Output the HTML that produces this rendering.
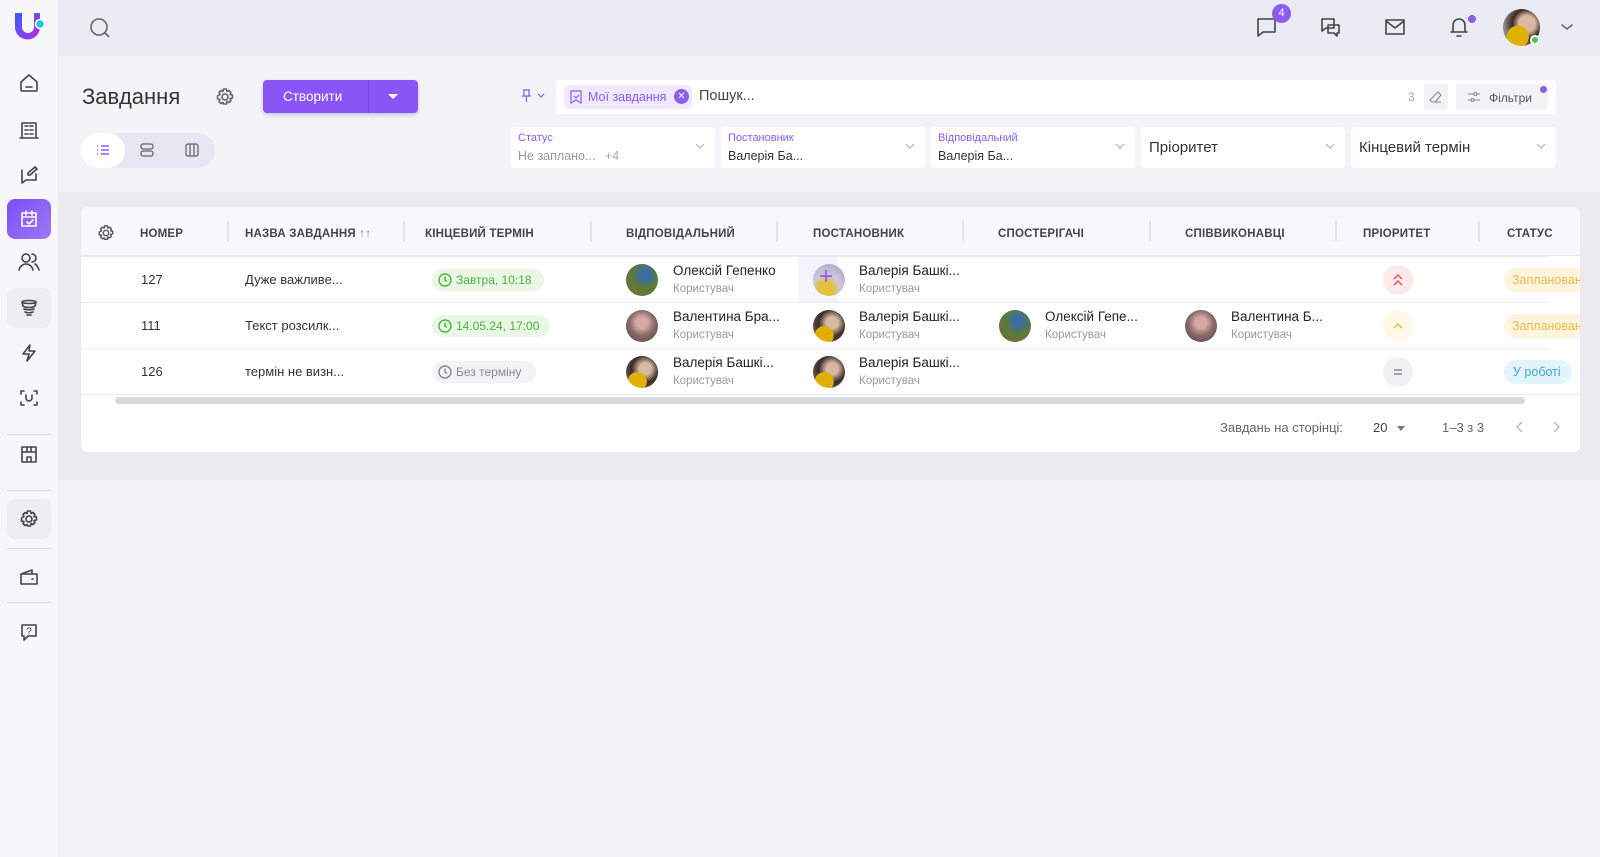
<!DOCTYPE html>
<html><head><meta charset="utf-8"><style>
*{box-sizing:border-box;margin:0;padding:0}
body{width:1600px;height:857px;overflow:hidden;background:#f1f1f6;font-family:"Liberation Sans",sans-serif;color:#333;position:relative}
.a{position:absolute}
svg{display:block}
.side{left:0;top:0;width:59px;height:857px;background:#f7f7fa;border-right:1px solid #ececf2}
.top{left:59px;top:0;width:1541px;height:56px;background:#ebebf4}
.head{left:59px;top:56px;width:1541px;height:136px;background:#f4f4f8}
.band{left:59px;top:192px;width:1541px;height:288px;background:#eaeaf0}
.ic{stroke:#444;fill:none;stroke-width:1.6;stroke-linecap:round;stroke-linejoin:round}
.fbox{background:#fff;border-radius:4px;height:41px;top:127px;width:204px}
.lbl{font-size:11px;color:#8a5cf0;left:7px;top:5px}
.val{font-size:12.5px;color:#333;left:7px;top:22px}
.chev{right:10px;top:15px}
.th{font-size:11.5px;font-weight:bold;color:#444;letter-spacing:.2px;top:21px}
.dv{width:2px;height:20px;background:#e3e3e8;top:14px}
.row{left:0;width:1468px;height:46px;border-top:1px solid #ebebef}
.t{font-size:13px;color:#333}
.nm{font-size:13.5px;color:#222}
.sub{font-size:11.5px;color:#999}
.av{width:32px;height:32px;border-radius:50%}
</style></head><body>
<div class="a side"></div>
<div class="a top"></div>
<div class="a head"></div>
<div class="a band"></div>

<svg class="a" style="left:12px;top:10px" width="34" height="34" viewBox="0 0 34 34"><defs><linearGradient id="g" x1="0" y1="0" x2="1" y2="1"><stop offset="0" stop-color="#3b5bff"/><stop offset="1" stop-color="#b52ee0"/></linearGradient></defs><path d="M3 3h7v14a6 6 0 0 0 12 0V3h6v14a12 12 0 0 1-25 0z" fill="url(#g)"/><circle cx="28" cy="14" r="4.5" fill="#27c6e0" stroke="#fff" stroke-width="1.5"/></svg>
<svg class="a" style="left:19px;top:73px" width="20" height="20" viewBox="0 0 20 20"><path class="ic" d="M2 9l8-7 8 7v8a1 1 0 0 1-1 1H3a1 1 0 0 1-1-1z M7 14h6"/></svg>
<svg class="a" style="left:19px;top:120px" width="20" height="20" viewBox="0 0 20 20"><path class="ic" d="M3 18V3h14v15 M1 18h18 M6 6h3M11 6h3M6 10h3M11 10h3M6 14h3M11 14h3"/></svg>
<svg class="a" style="left:19px;top:165px" width="20" height="20" viewBox="0 0 20 20"><path class="ic" d="M3 5v13l4-3h10V9 M9 8l7-6 2 2-7 6-2 0z"/></svg>
<div class="a" style="left:7px;top:199px;width:44px;height:40px;border-radius:8px;background:linear-gradient(135deg,#7a4ef5,#a077fa)"></div>
<svg class="a" style="left:19px;top:209px" width="20" height="20" viewBox="0 0 20 20"><path class="ic" style="stroke:#fff" d="M3 4h14v13H3z M3 8h14 M7 2v4 M13 2v4 M8 13l2 2 4-4"/></svg>
<svg class="a" style="left:18px;top:252px" width="22" height="20" viewBox="0 0 22 20"><path class="ic" d="M8 10a4 4 0 1 0 0-8 4 4 0 0 0 0 8z M1 18c1-4 4-6 7-6s6 2 7 6 M14 2a4 4 0 0 1 0 8 M17 12c2 1 3 3 4 6"/></svg>
<div class="a" style="left:7px;top:288px;width:44px;height:40px;border-radius:8px;background:#ededf3"></div>
<svg class="a" style="left:19px;top:298px" width="20" height="20" viewBox="0 0 20 20"><path class="ic" d="M3 4c0-2 14-2 14 0s-14 2-14 0 M3 4l1 4c2 2 10 2 12 0l1-4 M5 11c2 1 8 1 10 0 M6 14c2 1 6 1 8 0 M8 17h4"/></svg>
<svg class="a" style="left:19px;top:343px" width="20" height="20" viewBox="0 0 20 20"><path class="ic" d="M11 2L4 11h6l-2 7 8-10h-6z"/></svg>
<svg class="a" style="left:19px;top:388px" width="20" height="20" viewBox="0 0 20 20"><path class="ic" d="M2 6V3h3 M15 3h3v3 M18 14v3h-3 M5 17H2v-3 M7 7v3a3 3 0 0 0 6 0V7"/></svg>
<div class="a" style="left:7px;top:434px;width:44px;height:1px;background:#dcdce2"></div>
<svg class="a" style="left:19px;top:444px" width="20" height="20" viewBox="0 0 20 20"><path class="ic" d="M3 3h14v15H3z M3 8h14 M8 3v5 M12 3v5 M8 18v-5h4v5"/></svg>
<div class="a" style="left:7px;top:490px;width:44px;height:1px;background:#dcdce2"></div>
<div class="a" style="left:7px;top:499px;width:44px;height:40px;border-radius:8px;background:#ededf3"></div>
<svg class="a" style="left:19px;top:509px" width="20" height="20" viewBox="0 0 20 20"><circle class="ic" cx="10" cy="10" r="3"/><path class="ic" d="M8.5 2h3l.5 2.5 2-1 2 2-1 2 2.5.5v3l-2.5.5 1 2-2 2-2-1-.5 2.5h-3L8 15.5l-2 1-2-2 1-2-2.5-.5v-3L5 7.5l-1-2 2-2 2 1z"/></svg>
<div class="a" style="left:7px;top:548px;width:44px;height:1px;background:#dcdce2"></div>
<svg class="a" style="left:19px;top:567px" width="20" height="20" viewBox="0 0 20 20"><path class="ic" d="M2 7h16v10H2z M2 7l11-4v4 M13 12h1"/></svg>
<div class="a" style="left:7px;top:602px;width:44px;height:1px;background:#dcdce2"></div>
<svg class="a" style="left:19px;top:622px" width="20" height="20" viewBox="0 0 20 20"><path class="ic" d="M3 3h14v11H9l-4 4v-4H3z"/><text x="10" y="12.5" font-size="10" text-anchor="middle" fill="#444" font-family="Liberation Sans">?</text></svg>

<svg class="a" style="left:89px;top:17px" width="22" height="22" viewBox="0 0 22 22"><circle cx="10" cy="10" r="8" fill="none" stroke="#666" stroke-width="1.6"/><path d="M16 16l4 4" stroke="#666" stroke-width="1.6"/></svg>
<svg class="a" style="left:1256px;top:16px" width="22" height="22" viewBox="0 0 22 22"><path class="ic" d="M2 3h17v13H7l-5 4z"/></svg>
<div class="a" style="left:1272px;top:4px;width:19px;height:19px;border-radius:50%;background:#8a5cf0;color:#fff;font-size:11px;text-align:center;line-height:19px">4</div>
<svg class="a" style="left:1320px;top:17px" width="22" height="22" viewBox="0 0 22 22"><path class="ic" d="M2 2h12v9H6l-4 3z M8 8h11v8h-2v3l-3-3H8z"/></svg>
<svg class="a" style="left:1384px;top:18px" width="22" height="18" viewBox="0 0 22 18"><path class="ic" d="M2 2h18v14H2z M2 3l9 7 9-7"/></svg>
<svg class="a" style="left:1448px;top:16px" width="22" height="22" viewBox="0 0 22 22"><path class="ic" d="M5 16V9a6 6 0 0 1 12 0v7 M3 16h16 M9 20h4"/></svg>
<div class="a" style="left:1468px;top:15px;width:8px;height:8px;border-radius:50%;background:#8a5cf0"></div>
<div class="a" style="left:1503px;top:9px;width:37px;height:37px;border-radius:50%;background:radial-gradient(circle at 40% 75%,#e0b000 0 30%,transparent 32%),radial-gradient(circle at 65% 40%,#d8b8a0 0 25%,#3a2a25 45%,#8d8a86 70%)"></div>
<div class="a" style="left:1530px;top:35px;width:10px;height:10px;border-radius:50%;background:#4cc24c;border:2px solid #fff"></div>
<svg class="a" style="left:1560px;top:22px" width="14" height="10" viewBox="0 0 14 10"><path class="ic" d="M2 3l5 4 5-4" style="stroke:#666"/></svg>

<div class="a" style="left:82px;top:84px;font-size:22px;color:#333">Завдання</div>
<svg class="a" style="left:215px;top:87px" width="20" height="20" viewBox="0 0 20 20"><circle class="ic" cx="10" cy="10" r="3" style="stroke:#666"/><path class="ic" style="stroke:#666" d="M8.5 2h3l.5 2.5 2-1 2 2-1 2 2.5.5v3l-2.5.5 1 2-2 2-2-1-.5 2.5h-3L8 15.5l-2 1-2-2 1-2-2.5-.5v-3L5 7.5l-1-2 2-2 2 1z"/></svg>
<div class="a" style="left:263px;top:80px;width:155px;height:33px;border-radius:4px;background:#8a55f5;box-shadow:0 2px 4px rgba(120,80,230,.3)"></div>
<div class="a" style="left:283px;top:89px;font-size:13.5px;color:#fff">Створити</div>
<div class="a" style="left:368px;top:80px;width:1px;height:33px;background:#7544e0"></div>
<div class="a" style="left:388px;top:94px;width:0;height:0;border-left:5px solid transparent;border-right:5px solid transparent;border-top:5px solid #fff"></div>
<div class="a" style="left:81px;top:133px;width:134px;height:35px;border-radius:18px;background:#e8e6f3"></div>
<div class="a" style="left:81px;top:133px;width:44px;height:35px;border-radius:18px;background:#fff"></div>
<svg class="a" style="left:96px;top:144px" width="14" height="12" viewBox="0 0 14 12"><path d="M1 2h1M1 6h1M1 10h1M5 2h8M5 6h8M5 10h8" stroke="#8a5cf0" stroke-width="1.6"/></svg>
<svg class="a" style="left:140px;top:143px" width="14" height="14" viewBox="0 0 14 14"><rect x="1" y="1" width="12" height="5" rx="2" class="ic" style="stroke:#666;stroke-width:1.3"/><rect x="1" y="8" width="12" height="5" rx="2" class="ic" style="stroke:#666;stroke-width:1.3"/></svg>
<svg class="a" style="left:185px;top:143px" width="14" height="14" viewBox="0 0 14 14"><rect x="1" y="1" width="12" height="12" rx="2" class="ic" style="stroke:#666;stroke-width:1.3"/><path d="M5 1v12M9 1v12" stroke="#666" stroke-width="1.3"/></svg>

<div class="a" style="left:510px;top:80px;width:1046px;height:34px;border-radius:4px;background:#fff"></div>
<div class="a" style="left:510px;top:80px;width:46px;height:34px;border-radius:4px 0 0 4px;background:#f3f3f8"></div>
<svg class="a" style="left:521px;top:89px" width="28" height="14" viewBox="0 0 28 14"><path d="M2 1h7M3 1v6h5V1M1 7h9M5.5 7v6 M17 5l3 3 3-3" fill="none" stroke="#8a5cf0" stroke-width="1.2"/></svg>
<div class="a" style="left:564px;top:85px;width:128px;height:24px;border-radius:5px;background:#f0e9fd"></div>
<svg class="a" style="left:570px;top:90px" width="12" height="14" viewBox="0 0 12 14"><path d="M1 1h10v12L6 10l-5 3z M4 6l2 2 3-3" fill="none" stroke="#8a5cf0" stroke-width="1.2"/></svg>
<div class="a" style="left:588px;top:90px;font-size:12.5px;color:#8a5cf0">Мої завдання</div>
<div class="a" style="left:674px;top:89px;width:15px;height:15px;border-radius:50%;background:#8a5cf0;color:#fff;font-size:10px;text-align:center;line-height:15px">✕</div>
<div class="a" style="left:699px;top:88px;font-size:14.5px;color:#444">Пошук...</div>
<div class="a" style="left:1408px;top:90px;font-size:12px;color:#aaa">3</div>
<div class="a" style="left:1424px;top:84px;width:24px;height:26px;border-radius:4px;background:#f3f3f6"></div>
<svg class="a" style="left:1429px;top:90px" width="14" height="14" viewBox="0 0 14 14"><path d="M9 2l3 3-6 7H3l-2-2z M3 12h9" fill="none" stroke="#888" stroke-width="1.1"/></svg>
<div class="a" style="left:1456px;top:84px;width:92px;height:26px;border-radius:4px;background:#f3f3f6"></div>
<svg class="a" style="left:1467px;top:91px" width="14" height="12" viewBox="0 0 14 12"><path d="M1 3h6M10 3h3M1 9h3M7 9h6" stroke="#888" stroke-width="1.1"/><circle cx="8.5" cy="3" r="1.5" fill="none" stroke="#888"/><circle cx="5.5" cy="9" r="1.5" fill="none" stroke="#888"/></svg>
<div class="a" style="left:1489px;top:91px;font-size:12px;color:#555">Фільтри</div>
<div class="a" style="left:1540px;top:86px;width:7px;height:7px;border-radius:50%;background:#8a5cf0"></div>

<div class="a fbox" style="left:511px"><div class="a lbl">Статус</div><div class="a val" style="color:#999">Не заплано... <span style="margin-left:6px;color:#aaa">+4</span></div><svg class="a chev" width="10" height="8" viewBox="0 0 10 8"><path d="M1 2l4 4 4-4" fill="none" stroke="#aaa"/></svg></div>
<div class="a fbox" style="left:721px"><div class="a lbl">Постановник</div><div class="a val">Валерія Ба...</div><svg class="a chev" width="10" height="8" viewBox="0 0 10 8"><path d="M1 2l4 4 4-4" fill="none" stroke="#aaa"/></svg></div>
<div class="a fbox" style="left:931px"><div class="a lbl">Відповідальний</div><div class="a val">Валерія Ба...</div><svg class="a chev" width="10" height="8" viewBox="0 0 10 8"><path d="M1 2l4 4 4-4" fill="none" stroke="#aaa"/></svg></div>
<div class="a fbox" style="left:1141px"><div class="a" style="left:8px;top:12px;font-size:15px;color:#333">Пріоритет</div><svg class="a chev" width="10" height="8" viewBox="0 0 10 8"><path d="M1 2l4 4 4-4" fill="none" stroke="#aaa"/></svg></div>
<div class="a fbox" style="left:1351px;width:205px"><div class="a" style="left:8px;top:12px;font-size:15px;color:#333">Кінцевий термін</div><svg class="a chev" width="10" height="8" viewBox="0 0 10 8"><path d="M1 2l4 4 4-4" fill="none" stroke="#aaa"/></svg></div>

<div class="a" style="left:81px;top:207px;width:1499px;height:245px;background:#fff;border-radius:6px;overflow:hidden">
 <div class="a" style="left:0;top:0;width:1499px;height:49px;background:#f8f8fb;border-bottom:1px solid #e8e8ee"></div>
 <svg class="a" style="left:16px;top:17px" width="18" height="18" viewBox="0 0 20 20"><circle class="ic" cx="10" cy="10" r="3" style="stroke:#555"/><path class="ic" style="stroke:#555" d="M8.5 2h3l.5 2.5 2-1 2 2-1 2 2.5.5v3l-2.5.5 1 2-2 2-2-1-.5 2.5h-3L8 15.5l-2 1-2-2 1-2-2.5-.5v-3L5 7.5l-1-2 2-2 2 1z"/></svg>
 <div class="a th" style="left:59px">НОМЕР</div>
 <div class="a dv" style="left:146px"></div>
 <div class="a th" style="left:164px">НАЗВА ЗАВДАННЯ <span style="font-weight:normal;color:#888">↑↑</span></div>
 <div class="a dv" style="left:322px"></div>
 <div class="a th" style="left:344px">КІНЦЕВИЙ ТЕРМІН</div>
 <div class="a dv" style="left:509px"></div>
 <div class="a th" style="left:545px">ВІДПОВІДАЛЬНИЙ</div>
 <div class="a dv" style="left:695px"></div>
 <div class="a th" style="left:732px">ПОСТАНОВНИК</div>
 <div class="a dv" style="left:881px"></div>
 <div class="a th" style="left:917px">СПОСТЕРІГАЧІ</div>
 <div class="a dv" style="left:1068px"></div>
 <div class="a th" style="left:1104px">СПІВВИКОНАВЦІ</div>
 <div class="a dv" style="left:1254px"></div>
 <div class="a th" style="left:1282px">ПРІОРИТЕТ</div>
 <div class="a dv" style="left:1397px"></div>
 <div class="a th" style="left:1426px">СТАТУС</div>

 <div class="a row" style="top:49px">
  <div class="a t" style="left:60px;top:15px">127</div>
  <div class="a t" style="left:164px;top:15px">Дуже важливе...</div>
  <div class="a" style="left:351px;top:12px;width:112px;height:22px;border-radius:11px;background:#e9f7e4;color:#4bb33a;font-size:12px;line-height:22px;padding-left:24px">Завтра, 10:18</div>
  <svg class="a" style="left:357px;top:16px" width="14" height="14" viewBox="0 0 14 14"><circle cx="7" cy="7" r="6" fill="none" stroke="#4bb33a" stroke-width="1.4"/><path d="M7 3.5V7l2 1.5" fill="none" stroke="#4bb33a" stroke-width="1.4"/></svg>
  <div class="a av" style="left:545px;top:7px;background:radial-gradient(circle at 60% 35%,#3a6ea0 0 18%,#5a7a3a 45%,#7a6a30)"></div>
  <div class="a nm" style="left:592px;top:6px">Олексій Гепенко</div><div class="a sub" style="left:592px;top:26px">Користувач</div>
  <div class="a" style="left:717px;top:0;width:40px;height:45px;background:#f5f3fb"></div>
  <div class="a av" style="left:732px;top:7px;background:radial-gradient(circle at 40% 80%,#e5c040 0 25%,#cfc6df 45%,#a9a0c0)"></div>
  <div class="a" style="left:738px;top:6px;font-size:24px;color:#8a5cf0">+</div>
  <div class="a nm" style="left:778px;top:6px">Валерія Башкі...</div><div class="a sub" style="left:778px;top:26px">Користувач</div>
  <div class="a" style="left:1302px;top:8px;width:30px;height:30px;border-radius:50%;background:#fde9ea"></div>
  <svg class="a" style="left:1311px;top:16px" width="12" height="14" viewBox="0 0 12 14"><path d="M2 6l4-4 4 4M2 12l4-4 4 4" fill="none" stroke="#e05660" stroke-width="1.5"/></svg>
  <div class="a" style="left:1423px;top:11px;width:90px;height:24px;border-radius:12px;background:#fff5dc;color:#eab94a;font-size:12.5px;line-height:24px;padding-left:8px">Запланован</div>
 </div>
 <div class="a row" style="top:95px">
  <div class="a t" style="left:60px;top:15px">111</div>
  <div class="a t" style="left:164px;top:15px">Текст розсилк...</div>
  <div class="a" style="left:351px;top:12px;width:118px;height:22px;border-radius:11px;background:#e9f7e4;color:#4bb33a;font-size:12px;line-height:22px;padding-left:24px">14.05.24, 17:00</div>
  <svg class="a" style="left:357px;top:16px" width="14" height="14" viewBox="0 0 14 14"><circle cx="7" cy="7" r="6" fill="none" stroke="#4bb33a" stroke-width="1.4"/><path d="M7 3.5V7l2 1.5" fill="none" stroke="#4bb33a" stroke-width="1.4"/></svg>
  <div class="a av" style="left:545px;top:7px;background:radial-gradient(circle at 50% 40%,#d8a8a8 0 22%,#8a6a6a 50%,#504040)"></div>
  <div class="a nm" style="left:592px;top:6px">Валентина Бра...</div><div class="a sub" style="left:592px;top:26px">Користувач</div>
  <div class="a av" style="left:732px;top:7px;background:radial-gradient(circle at 35% 80%,#e0b000 0 28%,transparent 30%),radial-gradient(circle at 60% 40%,#d8b8a0 0 22%,#3a2a25 50%,#8d8a86)"></div>
  <div class="a nm" style="left:778px;top:6px">Валерія Башкі...</div><div class="a sub" style="left:778px;top:26px">Користувач</div>
  <div class="a av" style="left:918px;top:7px;background:radial-gradient(circle at 60% 35%,#3a6ea0 0 18%,#5a7a3a 45%,#7a6a30)"></div>
  <div class="a nm" style="left:964px;top:6px">Олексій Гепе...</div><div class="a sub" style="left:964px;top:26px">Користувач</div>
  <div class="a av" style="left:1104px;top:7px;background:radial-gradient(circle at 50% 40%,#d8a8a8 0 22%,#8a6a6a 50%,#504040)"></div>
  <div class="a nm" style="left:1150px;top:6px">Валентина Б...</div><div class="a sub" style="left:1150px;top:26px">Користувач</div>
  <div class="a" style="left:1302px;top:8px;width:30px;height:30px;border-radius:50%;background:#fff8e6"></div>
  <svg class="a" style="left:1311px;top:19px" width="12" height="8" viewBox="0 0 12 8"><path d="M2 6l4-4 4 4" fill="none" stroke="#eab94a" stroke-width="1.5"/></svg>
  <div class="a" style="left:1423px;top:11px;width:90px;height:24px;border-radius:12px;background:#fff5dc;color:#eab94a;font-size:12.5px;line-height:24px;padding-left:8px">Запланован</div>
 </div>
 <div class="a row" style="top:141px">
  <div class="a t" style="left:60px;top:15px">126</div>
  <div class="a t" style="left:164px;top:15px">термін не визн...</div>
  <div class="a" style="left:351px;top:12px;width:104px;height:22px;border-radius:11px;background:#f3f3f5;color:#888;font-size:12px;line-height:22px;padding-left:24px">Без терміну</div>
  <svg class="a" style="left:357px;top:16px" width="14" height="14" viewBox="0 0 14 14"><circle cx="7" cy="7" r="6" fill="none" stroke="#888" stroke-width="1.4"/><path d="M7 3.5V7l2 1.5" fill="none" stroke="#888" stroke-width="1.4"/></svg>
  <div class="a av" style="left:545px;top:7px;background:radial-gradient(circle at 35% 80%,#e0b000 0 28%,transparent 30%),radial-gradient(circle at 60% 40%,#d8b8a0 0 22%,#3a2a25 50%,#8d8a86)"></div>
  <div class="a nm" style="left:592px;top:6px">Валерія Башкі...</div><div class="a sub" style="left:592px;top:26px">Користувач</div>
  <div class="a av" style="left:732px;top:7px;background:radial-gradient(circle at 35% 80%,#e0b000 0 28%,transparent 30%),radial-gradient(circle at 60% 40%,#d8b8a0 0 22%,#3a2a25 50%,#8d8a86)"></div>
  <div class="a nm" style="left:778px;top:6px">Валерія Башкі...</div><div class="a sub" style="left:778px;top:26px">Користувач</div>
  <div class="a" style="left:1302px;top:8px;width:30px;height:30px;border-radius:50%;background:#f1f1f4"></div>
  <svg class="a" style="left:1311px;top:19px" width="12" height="8" viewBox="0 0 12 8"><path d="M2 2h8M2 6h8" fill="none" stroke="#888" stroke-width="1.5"/></svg>
  <div class="a" style="left:1423px;top:11px;width:68px;height:24px;border-radius:12px;background:#e3f4fb;color:#3aa8d8;font-size:12.5px;line-height:24px;padding-left:9px">У роботі</div>
 </div>
 <div class="a" style="left:0;top:187px;width:1499px;height:1px;background:#e8e8ee"></div>
 <div class="a" style="left:34px;top:190px;width:1410px;height:7px;border-radius:4px;background:#d9d9e0"></div>
 <div class="a" style="left:1139px;top:213px;font-size:13px;color:#666">Завдань на сторінці:</div>
 <div class="a" style="left:1292px;top:213px;font-size:13px;color:#444">20</div>
 <div class="a" style="left:1316px;top:219px;border-left:4px solid transparent;border-right:4px solid transparent;border-top:5px solid #777"></div>
 <div class="a" style="left:1361px;top:213px;font-size:13px;color:#666">1–3 з 3</div>
 <svg class="a" style="left:1434px;top:213px" width="10" height="14" viewBox="0 0 10 14"><path d="M7 2L2 7l5 5" fill="none" stroke="#bbb" stroke-width="1.4"/></svg>
 <svg class="a" style="left:1470px;top:213px" width="10" height="14" viewBox="0 0 10 14"><path d="M3 2l5 5-5 5" fill="none" stroke="#bbb" stroke-width="1.4"/></svg>
</div>
</body></html>
